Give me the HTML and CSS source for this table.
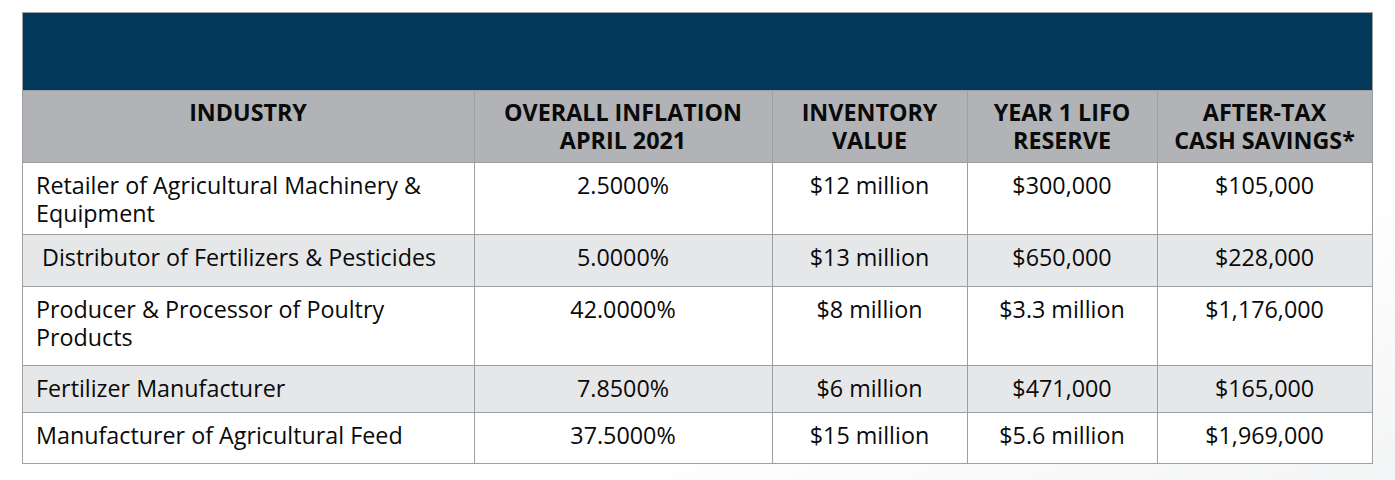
FILE: index.html
```html
<!DOCTYPE html>
<html lang="en">
<head>
<meta charset="utf-8">
<title>LIFO Savings by Industry</title>
<link rel="stylesheet" href="styles.css">
</head>
<body>
<div class="page">
  <table class="lifo">
    <colgroup>
      <col class="c-industry">
      <col class="c-inflation">
      <col class="c-inventory">
      <col class="c-reserve">
      <col class="c-savings">
    </colgroup>
    <thead>
      <tr class="banner"><th colspan="5"></th></tr>
      <tr class="heads">
        <th>INDUSTRY</th>
        <th>OVERALL INFLATION<br>APRIL 2021</th>
        <th>INVENTORY<br>VALUE</th>
        <th>YEAR 1 LIFO<br>RESERVE</th>
        <th>AFTER-TAX<br>CASH SAVINGS*</th>
      </tr>
    </thead>
    <tbody>
      <tr class="r1">
        <td class="name">Retailer of Agricultural Machinery &amp; Equipment</td>
        <td>2.5000%</td><td>$12 million</td><td>$300,000</td><td>$105,000</td>
      </tr>
      <tr class="r2 alt">
        <td class="name indent">Distributor of Fertilizers &amp; Pesticides</td>
        <td>5.0000%</td><td>$13 million</td><td>$650,000</td><td>$228,000</td>
      </tr>
      <tr class="r3">
        <td class="name">Producer &amp; Processor of Poultry Products</td>
        <td>42.0000%</td><td>$8 million</td><td>$3.3 million</td><td>$1,176,000</td>
      </tr>
      <tr class="r4 alt">
        <td class="name">Fertilizer Manufacturer</td>
        <td>7.8500%</td><td>$6 million</td><td>$471,000</td><td>$165,000</td>
      </tr>
      <tr class="r5">
        <td class="name">Manufacturer of Agricultural Feed</td>
        <td>37.5000%</td><td>$15 million</td><td>$5.6 million</td><td>$1,969,000</td>
      </tr>
    </tbody>
  </table>
</div>
</body>
</html>
```
FILE: styles.css
```css
html, body {
  margin: 0;
  height: 100%;
}
body {
  font-family: "Open Sans", "Noto Sans", sans-serif;
  color: #0a0a0a;
  background: linear-gradient(160deg, #ffffff 0%, #ffffff 70%, #f3f4f5 100%);
}
.page {
  padding: 12px 0 0 22px;
}
.lifo {
  border-collapse: collapse;
  table-layout: fixed;
  width: 1350px;
  font-size: 23.3px;
  line-height: 28px;
}
.c-industry { width: 452px; }
.c-inflation { width: 298px; }
.c-inventory { width: 195px; }
.c-reserve { width: 190px; }
.c-savings { width: 215px; }

.lifo th, .lifo td {
  border: 1px solid #9d9fa2;
  padding: 8px 14px 0 13px;
  vertical-align: top;
  text-align: center;
}
.banner th {
  background: #033a5c;
  height: 77px;
  padding: 0;
}
.heads th {
  background: #b1b3b6;
  font-weight: 700;
  height: 64px;
  padding-top: 7px;
}
.lifo td {
  background: #fff;
}
.lifo tr.alt td {
  background: #e6e7e8;
}
.lifo td.name {
  text-align: left;
}
.lifo td.indent {
  padding-left: 19px;
}
.r1 { height: 72px; }
.r2 { height: 52px; }
.r3 { height: 79px; }
.r4 { height: 47px; }
.r5 { height: 51px; }
```
